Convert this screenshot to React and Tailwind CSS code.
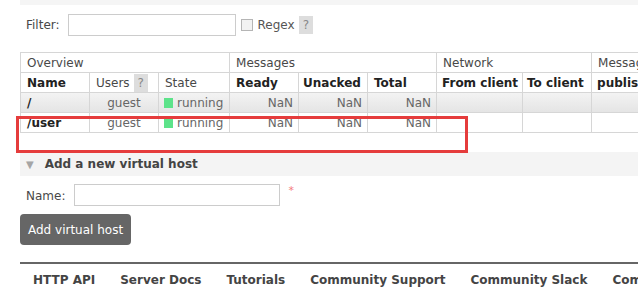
import React from 'react';

const font = { fontFamily: '"DejaVu Sans", Verdana, sans-serif' };

const Help = () => (
  <span className="inline-block bg-[#dddddd] text-[#888] px-[4px] leading-[18px] ml-[4px]">?</span>
);

const Running = () => (
  <span className="flex items-center gap-[4px]">
    <span className="inline-block w-[9px] h-[10px] bg-[#5de38a]" />
    running
  </span>
);

const rows = [
  { name: '/', user: 'guest', shade: true },
  { name: '/user', user: 'guest', shade: false },
];

const App = () => {
  return (
    <div className="relative w-[638px] h-[287px] overflow-hidden bg-white text-[12px] text-[#484848]" style={font}>
      <div className="ml-[20px] h-[5px] bg-[#f5f5f5]" />

      {/* Filter */}
      <div className="flex items-center pl-[26px] mt-[9px] h-[22px]">
        <span className="mr-[8px]">Filter:</span>
        <input type="text" className="w-[168px] h-[22px] border border-[#cccccc] bg-white" />
        <span className="ml-[5px] w-[12px] h-[12px] border border-[#b5b5b5] bg-[#f2f2f2]" />
        <span className="ml-[5px] text-[#555]">Regex</span>
        <Help />
      </div>

      {/* Table */}
      <div className="ml-[20px] mt-[16px] w-[700px]">
        <table className="border-collapse table-fixed w-[700px]">
          <colgroup>
            <col className="w-[69px]" />
            <col className="w-[69px]" />
            <col className="w-[71px]" />
            <col className="w-[69px]" />
            <col className="w-[69px]" />
            <col className="w-[69px]" />
            <col className="w-[86px]" />
            <col className="w-[69px]" />
            <col className="w-[129px]" />
          </colgroup>
          <thead>
            <tr className="h-[20px]">
              <th colSpan={3} className="border border-[#d6d6d6] text-left font-normal px-[6px]">Overview</th>
              <th colSpan={3} className="border border-[#d6d6d6] text-left font-normal px-[6px]">Messages</th>
              <th colSpan={2} className="border border-[#d6d6d6] text-left font-normal px-[6px]">Network</th>
              <th className="border border-[#d6d6d6] text-left font-normal px-[6px] whitespace-nowrap">Message rates</th>
            </tr>
            <tr className="h-[20px]">
              <th className="border border-[#d6d6d6] text-left font-bold text-[#222] px-[6px]">Name</th>
              <th className="border border-[#d6d6d6] text-left font-normal px-[6px] whitespace-nowrap">
                Users<Help />
              </th>
              <th className="border border-[#d6d6d6] text-left font-normal px-[6px]">State</th>
              <th className="border border-[#d6d6d6] text-left font-bold text-[#222] px-[6px]">Ready</th>
              <th className="border border-[#d6d6d6] text-left font-bold text-[#222] px-[4px]">Unacked</th>
              <th className="border border-[#d6d6d6] text-left font-bold text-[#222] px-[6px]">Total</th>
              <th className="border border-[#d6d6d6] text-left font-bold text-[#222] px-[5px] whitespace-nowrap">From client</th>
              <th className="border border-[#d6d6d6] text-left font-bold text-[#222] px-[4px] whitespace-nowrap">To client</th>
              <th className="border border-[#d6d6d6] text-left font-bold text-[#222] px-[5px] whitespace-nowrap">publish</th>
            </tr>
          </thead>
          <tbody>
            {rows.map((r) => (
              <tr key={r.name} className={r.shade ? 'h-[20px] bg-gradient-to-b from-[#f3f3f3] to-[#e4e4e4]' : 'h-[20px] bg-white'}>
                <td className="border border-[#d6d6d6] font-bold text-[#222] px-[6px]">{r.name}</td>
                <td className="border border-[#d6d6d6] text-center text-[#666]">{r.user}</td>
                <td className="border border-[#d6d6d6] text-[#666] px-[5px]"><Running /></td>
                <td className="border border-[#d6d6d6] text-right text-[#666] px-[5px]">NaN</td>
                <td className="border border-[#d6d6d6] text-right text-[#666] px-[5px]">NaN</td>
                <td className="border border-[#d6d6d6] text-right text-[#666] px-[5px]">NaN</td>
                <td className="border border-[#d6d6d6]" />
                <td className="border border-[#d6d6d6]" />
                <td className="border border-[#d6d6d6]" />
              </tr>
            ))}
          </tbody>
        </table>
      </div>

      {/* Add vhost section */}
      <div className="ml-[20px] mt-[19px] h-[24px] bg-[#f4f4f4] flex items-center">
        <span className="ml-[6px] text-[#a5a5a5] text-[10px]">▼</span>
        <span className="ml-[11px] font-bold text-[12px] text-[#444]">Add a new virtual host</span>
      </div>

      <div className="flex items-start pl-[26px] mt-[8px]">
        <span className="mt-[3px] mr-[9px]">Name:</span>
        <input type="text" className="w-[206px] h-[22px] border border-[#cccccc] bg-white" />
        <span className="ml-[8px] text-[#f47c7c] text-[11px] leading-[14px]">*</span>
      </div>

      <div className="pl-[20px] mt-[8px]">
        <button className="h-[31px] px-[8px] rounded-[4px] bg-[#666666] text-white text-[12px]">
          Add virtual host
        </button>
      </div>

      {/* Footer */}
      <div className="ml-[20px] mt-[17px] h-[2px] bg-[#666]" />
      <div className="flex pl-[33px] mt-[7px] gap-[25px] font-bold text-[#444] whitespace-nowrap">
        <span>HTTP API</span>
        <span>Server Docs</span>
        <span>Tutorials</span>
        <span>Community Support</span>
        <span>Community Slack</span>
        <span>Commercial Support</span>
      </div>

      {/* annotation */}
      <div className="absolute left-[16px] top-[116px] w-[452px] h-[37px] border-[3px] border-[#e53c3c] pointer-events-none" />
    </div>
  );
};

export default App;
